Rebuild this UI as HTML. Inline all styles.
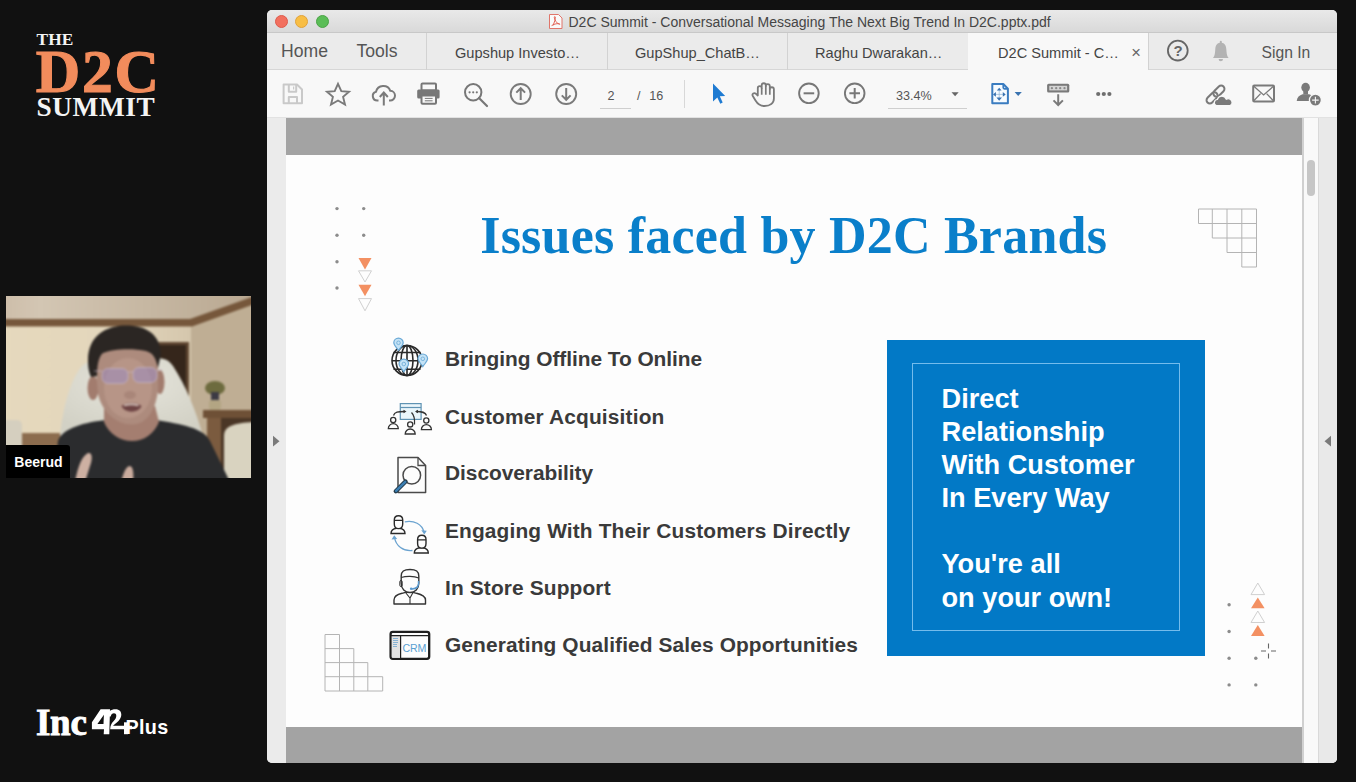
<!DOCTYPE html>
<html><head><meta charset="utf-8">
<style>
*{margin:0;padding:0;box-sizing:border-box}
html,body{width:1356px;height:782px;overflow:hidden;background:#111111;font-family:"Liberation Sans",sans-serif}
.a{position:absolute}
.t{position:absolute;white-space:pre;line-height:1}
svg{position:absolute;overflow:visible}
</style></head><body>
<div class="a" style="left:0;top:0;width:1356px;height:782px">

<!-- ===== LEFT: logo ===== -->
<div class="t" style="left:36.5px;top:31.3px;font-family:'Liberation Serif',serif;font-weight:700;font-size:17.3px;color:#f4f4f4;letter-spacing:0.2px">THE</div>
<div class="t" style="left:35.8px;top:40.6px;font-family:'Liberation Serif',serif;font-size:61.6px;color:#f28c5c;font-weight:700;letter-spacing:1.7px;-webkit-text-stroke:1.1px #f28c5c">D2C</div>
<div class="t" style="left:36.5px;top:93.5px;font-family:'Liberation Serif',serif;font-weight:700;font-size:27.3px;color:#f4f4f4;letter-spacing:0.6px">SUMMIT</div>

<!-- ===== video ===== -->
<div id="video" class="a" style="left:6px;top:296px;width:245px;height:182px;overflow:hidden;background:#dccfb6">
  <svg width="253" height="190" style="left:-4px;top:-4px;filter:blur(0.9px)"><g transform="translate(4,4)">
    <defs>
      <linearGradient id="wallg" x1="0" x2="1" y1="0" y2="0">
        <stop offset="0" stop-color="#e6d9bd"/><stop offset="0.45" stop-color="#e3d6bc"/><stop offset="1" stop-color="#c9baa0"/>
      </linearGradient>
      <linearGradient id="ceilg" x1="0" x2="1" y1="0" y2="0">
        <stop offset="0" stop-color="#cdbda9"/><stop offset="0.15" stop-color="#d3c6b3"/><stop offset="1" stop-color="#b9a891"/>
      </linearGradient>
      <radialGradient id="chairg" cx="0.5" cy="0.3" r="0.7">
        <stop offset="0" stop-color="#e6e5dc"/><stop offset="1" stop-color="#d2d1c5"/>
      </radialGradient>
    </defs>
    <rect x="-4" y="-4" width="253" height="190" fill="url(#wallg)"/>
    <path d="M-4 -4 H249 V2 L185 24 H-4 Z" fill="url(#ceilg)"/>
    <path d="M185 30 L249 8 V186 H185 Z" fill="#bfae94"/>
    <path d="M-4 23 H184 L249 0 V8 L186 30.5 H-4 Z" fill="#76573b"/>
    <!-- doorway -->
    <rect x="149" y="46" width="34" height="95" fill="#5f4631"/>
    <rect x="152" y="49" width="28" height="92" fill="#35261b"/>
    <!-- wainscot left -->
    <rect x="-4" y="137" width="64" height="49" fill="#8c6c4e"/>
    <rect x="-4" y="124" width="20" height="62" rx="5" fill="#d5cfbf"/>
    <!-- mantel right -->
    <rect x="197" y="114" width="52" height="8" fill="#6e5036"/>
    <rect x="201" y="122" width="14" height="64" fill="#7b5b3f"/>
    <rect x="215" y="122" width="34" height="64" fill="#4a3626"/>
    <path d="M218 186 V140 C218 130 228 127 249 126 V186 Z" fill="#d9d3c0"/>
    <!-- vase flowers -->
    <ellipse cx="209" cy="92" rx="10" ry="7" fill="#6d6b3e"/>
    <rect x="205" y="96" width="8" height="10" fill="#3c3a44"/>
    <rect x="203" y="104" width="12" height="10" rx="3" fill="#b3a583"/>
    <!-- chair -->
    <path d="M54 140 C57 112 64 84 76 70 C80 66 86 65 92 65 L150 62 C158 62 163 64 167 70 C180 90 190 115 197 140 Z" fill="url(#chairg)"/>
    <!-- shirt -->
    <path d="M47 186 L52 145 C56 132 80 126 100 124 C108 134 122 142 132 142 C140 140 146 132 150 124 C175 128 198 132 204 145 L224 186 Z" fill="#2b2c2e"/>
    <!-- neck -->
    <path d="M98 110 H149 L153 126 C148 138 138 145 126 145 C114 145 103 138 98 126 Z" fill="#a47e70"/>
    <!-- ears -->
    <ellipse cx="87" cy="92" rx="5.5" ry="12" fill="#a27c6e"/>
    <ellipse cx="154" cy="86" rx="4.5" ry="12" fill="#a27c6e"/>
    <!-- face -->
    <path d="M89 66 C90 52 104 46 121 46 C139 46 151 52 152 66 L152 94 C150 112 142 128.5 126 128.5 C110 128.5 96 116 92 98 Z" fill="#ad8b7d"/>
    <ellipse cx="122" cy="92" rx="24" ry="30" fill="#c09e90" opacity="0.55"/>
    <!-- hair -->
    <path d="M82 64 C82 40 100 29.5 120 29.5 C140 29.5 154 38 155 58 L152 72 C150 62 147 57 140 55 C126 52 106 53 97 57 C93 60 91 68 91 80 L85 81 C82 74 82 68 82 64 Z" fill="#2b2623"/>
    
    <!-- glasses -->
    <rect x="96" y="72.5" width="26" height="15" rx="6" fill="#9d8cc0" opacity="0.55"/>
    <rect x="127" y="71.5" width="24" height="15" rx="6" fill="#9d8cc0" opacity="0.55"/>
    <g fill="none" stroke="#c8b8c8" stroke-width="0.9" opacity="0.8">
      <rect x="96" y="72.5" width="26" height="15" rx="6"/><rect x="127" y="71.5" width="24" height="15" rx="6"/>
      <path d="M88 75 H96 M122 76 H127 M151 74 H156"/>
    </g>
    <!-- nose shadow -->
    <ellipse cx="124" cy="99" rx="6" ry="4" fill="#9c786c" opacity="0.5"/>
    <!-- mouth -->
    <path d="M115.5 110 C120 106 131 106 135.5 110 C133 117 119 118 115.5 110 Z" fill="#6e4444"/>
    <path d="M118 109.5 C123 108 128 108 132.5 109.5" stroke="#d8c8c0" stroke-width="1.6" fill="none"/>
    <!-- hands -->
    <path d="M69 186 C72 170 76 160 82 157 C86 156 87 162 84 170 L79 186 Z" fill="#cdb0a2"/>
    <path d="M115 186 C118 174 121 170 124 170 C127 171 128 176 127 186 Z" fill="#c9ab9d"/>
    </g>
  </svg>
  <div class="a" style="left:0;top:149px;width:64px;height:33px;background:#000;border-radius:0 3px 0 0"></div>
  <div class="t" style="left:8.3px;top:158.8px;font-weight:700;font-size:14px;color:#fff">Beerud</div>
</div>

<!-- ===== Inc42 logo ===== -->
<div id="inc42" class="a" style="left:0;top:0;width:200px;height:782px">
  <div class="t" style="left:36px;top:703.5px;font-family:'Liberation Serif',serif;font-weight:700;font-size:37px;color:#fff;letter-spacing:-0.3px;-webkit-text-stroke:0.9px #fff">Inc</div>
  <svg width="200" height="782" style="left:0;top:0">
    <path fill-rule="evenodd" d="M100.6 709.2 H110 L109.3 734.2 H103.7 L104 729.2 H91.9 V722.3 Z M103.9 714.8 L97.4 724 H103.5 Z" fill="#fff"/>
    <path d="M106.8 716.5 C107.5 711.5 111 709.2 115.5 709.2 C119.5 709.2 121.3 711.5 121.3 714.5 C121.3 718.5 118.5 721.5 115 724 L113 725.7 H132 V729.2 H110.2 C110.2 726 111.5 723.2 113.5 721.3 C115.5 719.3 116.3 717.5 116.3 715.8 C116.3 714 115.2 713.3 114 713.3 C112.3 713.3 111.2 714.5 110.7 716.5 Z" fill="#fff"/>
    <path d="M124 722.3 H128 V734.2 H124 Z" fill="#fff"/>
  </svg>
  <div class="t" style="left:125.5px;top:717.5px;font-weight:700;font-size:19.8px;color:#fff;letter-spacing:0.3px">Plus</div>
</div>

<!-- ===== window ===== -->
<div id="win" class="a" style="left:267px;top:10px;width:1070px;height:753px;border-radius:5px;overflow:hidden;background:#ebebeb">
  <!-- title bar -->
  <div class="a" style="left:0;top:0;width:1070px;height:23px;background:linear-gradient(#e9e9e9,#d9d9d9);border-bottom:1px solid #c8c8c8"></div>
  <div class="a" style="left:7.8px;top:4.8px;width:13px;height:13px;border-radius:50%;background:#f2705f;border:0.6px solid #dd5a4c"></div>
  <div class="a" style="left:28.3px;top:4.8px;width:13px;height:13px;border-radius:50%;background:#f8be45;border:0.6px solid #e0a23a"></div>
  <div class="a" style="left:48.8px;top:4.8px;width:13px;height:13px;border-radius:50%;background:#5bbd57;border:0.6px solid #4aa346"></div>
  <div class="t" style="left:301.5px;top:4.5px;font-size:14px;color:#454545">D2C Summit - Conversational Messaging The Next Big Trend In D2C.pptx.pdf</div>

  <!-- tab bar -->
  <div class="a" style="left:0;top:23px;width:1070px;height:37px;background:#ebebeb;border-bottom:1px solid #d6d6d6"></div>
  <div class="t" style="left:14px;top:32.5px;font-size:17.6px;color:#555">Home</div>
  <div class="t" style="left:89.5px;top:32.5px;font-size:17.6px;color:#555">Tools</div>
  <div class="a" style="left:159px;top:23px;width:1px;height:37px;background:#d2d2d2"></div>
  <div class="a" style="left:340px;top:23px;width:1px;height:37px;background:#d2d2d2"></div>
  <div class="a" style="left:520px;top:23px;width:1px;height:37px;background:#d2d2d2"></div>
  <div class="a" style="left:701px;top:23px;width:180px;height:37px;background:#f8f8f8"></div>
  <div class="a" style="left:881px;top:23px;width:1px;height:37px;background:#d2d2d2"></div>
  <div class="t" style="left:188px;top:35.5px;font-size:14.6px;color:#444">Gupshup Investo…</div>
  <div class="t" style="left:368px;top:35.5px;font-size:14.6px;color:#444">GupShup_ChatB…</div>
  <div class="t" style="left:548px;top:35.5px;font-size:14.6px;color:#444">Raghu Dwarakan…</div>
  <div class="t" style="left:731px;top:35.5px;font-size:14.6px;color:#444">D2C Summit - C…</div>
  <div class="t" style="left:864.3px;top:34.2px;font-size:16.5px;color:#666">×</div>
  <div class="t" style="left:994.5px;top:34.5px;font-size:15.7px;color:#555">Sign In</div>

  <!-- toolbar -->
  <div class="a" style="left:0;top:60px;width:1070px;height:48px;background:#f8f8f8;border-bottom:1px solid #e2e2e2"></div>
  <div class="t" style="left:340.5px;top:79.8px;font-size:12.6px;color:#555">2</div>
  <div class="a" style="left:333px;top:97.5px;width:31px;height:1px;background:#cfcfcf"></div>
  <div class="t" style="left:370px;top:79.8px;font-size:12.6px;color:#555">/</div><div class="t" style="left:382.2px;top:79.8px;font-size:12.6px;color:#555">16</div>
  <div class="a" style="left:417px;top:70px;width:1px;height:28px;background:#d8d8d8"></div>
  <div class="t" style="left:629px;top:79.6px;font-size:12.6px;color:#555">33.4%</div>
  <div class="a" style="left:620.5px;top:97.5px;width:79px;height:1px;background:#cfcfcf"></div>

  <!-- doc area -->
  <div class="a" style="left:0;top:108px;width:1070px;height:645px;background:#ebebeb"></div>
  <div class="a" style="left:19px;top:108px;width:1016px;height:645px;background:#a3a3a3"></div>
  <div id="page" class="a" style="left:19px;top:145px;width:1016px;height:572px;background:#fdfdfd"></div>
  <div class="a" style="left:1035px;top:108px;width:2px;height:645px;background:#d0d0d0"></div>
  <div class="a" style="left:1037px;top:108px;width:14px;height:645px;background:#f9f9f9"></div>
  <div class="a" style="left:1051px;top:108px;width:1px;height:645px;background:#d9d9d9"></div>
  <div class="a" style="left:1052px;top:108px;width:18px;height:645px;background:#e9e9e9"></div>
  <div class="a" style="left:1040px;top:150px;width:8px;height:36px;border-radius:4px;background:#c6c6c6"></div>
</div>



  <!-- toolbar icons -->
  <svg width="1356" height="782" style="left:0;top:0">
    <!-- save -->
    <g fill="none" stroke="#c9c9c9" stroke-width="2" stroke-linejoin="round">
      <path d="M283.6 84.5 H297 L302 89.5 V103.3 H283.6 Z"/>
      <path d="M288.8 84.5 V91.8 H296.2 V84.5"/>
      <path d="M288.8 103.3 V97 H297 V103.3"/>
    </g>
    <line x1="293.6" y1="86.5" x2="293.6" y2="89.5" stroke="#c9c9c9" stroke-width="1.2"/>
    <!-- star -->
    <path d="M338 83.8 L341.3 91.2 L349 91.8 L343.1 96.9 L345 104.6 L338 100.5 L331 104.6 L332.9 96.9 L327 91.8 L334.7 91.2 Z" fill="none" stroke="#7a7a7a" stroke-width="1.9" stroke-linejoin="miter"/>
    <!-- cloud upload -->
    <path d="M378.5 100.5 H377.5 A4.5 4.5 0 0 1 376 91.7 A7.5 7.5 0 0 1 390.3 90.8 A4.8 4.8 0 0 1 390 100.5 H389" fill="none" stroke="#7a7a7a" stroke-width="2"/>
    <path d="M383.8 105.6 V93 M379.8 97 L383.8 92.5 L387.8 97" fill="none" stroke="#7a7a7a" stroke-width="2"/>
    <!-- printer -->
    <rect x="421.5" y="83.6" width="14.5" height="7" rx="1" fill="none" stroke="#777" stroke-width="2"/>
    <rect x="417.2" y="89.5" width="22.4" height="9" rx="1.5" fill="#777"/>
    <rect x="421.5" y="95.5" width="14.5" height="8.2" rx="1" fill="#f8f8f8" stroke="#777" stroke-width="2"/>
    <path d="M424.8 98.4 H432.6 M424.8 100.8 H432.6" stroke="#777" stroke-width="1"/>
    <!-- search -->
    <circle cx="473.2" cy="92.3" r="8.2" fill="none" stroke="#777" stroke-width="2"/>
    <path d="M479 98 L487 106" stroke="#777" stroke-width="2.2" stroke-linecap="round"/>
    <g fill="#777"><circle cx="469.6" cy="92.3" r="1.1"/><circle cx="473.2" cy="92.3" r="1.1"/><circle cx="476.8" cy="92.3" r="1.1"/></g>
    <!-- up / down circles -->
    <circle cx="520.7" cy="94" r="10" fill="none" stroke="#7a7a7a" stroke-width="1.9"/>
    <path d="M520.7 100 V88.5 M516.3 92.6 L520.7 88.2 L525.1 92.6" fill="none" stroke="#7a7a7a" stroke-width="2"/>
    <circle cx="566.2" cy="94" r="10" fill="none" stroke="#7a7a7a" stroke-width="1.9"/>
    <path d="M566.2 88 V99.5 M561.8 95.4 L566.2 99.8 L570.6 95.4" fill="none" stroke="#7a7a7a" stroke-width="2"/>
    <!-- cursor -->
    <path d="M713 83.5 L725.2 96 L719.8 96.2 L722.7 102.6 L720.3 103.8 L717.3 97.4 L713 101.5 Z" fill="#1f7bd2"/>
    <!-- hand -->
    <path d="M757.8 95.5 V88 A1.95 1.95 0 0 1 761.7 88 V85.3 A2.05 2.05 0 0 1 765.8 85.3 V86.2 A2 2 0 0 1 769.8 86.2 V89.3 A2.05 2.05 0 0 1 773.9 89.3 V98.5 C773.9 103.3 770 106 764.5 106 C760 106 757.5 103.8 755.5 100.5 L752.8 96 C751.6 93.8 754 92.3 756 93.8 Z" fill="none" stroke="#7a7a7a" stroke-width="1.8" stroke-linejoin="round"/>
    <path d="M761.7 88 V94.8 M765.8 86.2 V94.8 M769.8 89.3 V94.8" stroke="#7a7a7a" stroke-width="1.7"/>
    <!-- minus / plus -->
    <circle cx="808.9" cy="93.3" r="9.8" fill="none" stroke="#777" stroke-width="1.9"/>
    <path d="M803.6 93.3 H814.2" stroke="#777" stroke-width="2"/>
    <circle cx="854.7" cy="93.3" r="9.8" fill="none" stroke="#777" stroke-width="1.9"/>
    <path d="M849.4 93.3 H860 M854.7 88 V98.6" stroke="#777" stroke-width="2"/>
    <!-- zoom dropdown -->
    <path d="M951.5 92.3 H958.7 L955.1 96.3 Z" fill="#666"/>
    <!-- page move icon -->
    <path d="M992.3 84 H1003.3 L1007.9 88.8 V103.3 H992.3 Z" fill="#f6fbff" stroke="#3a7cc0" stroke-width="2" stroke-linejoin="round"/>
    <path d="M1003.3 84.5 V87.5 A1.3 1.3 0 0 0 1004.6 88.8 H1007.5" fill="none" stroke="#3a7cc0" stroke-width="1.8"/>
    <g stroke="#8fb3d6" stroke-width="0.7" fill="none"><path d="M999.2 89 V100 M994 94.4 H1005"/></g>
    <g fill="#3a73b0"><path d="M999.2 87.8 L996.8 90.6 H1001.6 Z M999.2 100.8 L996.4 97.5 H1002 Z M993 94.4 L995.9 92 V96.8 Z M1005.7 94.4 L1002.8 92 V96.8 Z"/></g>
    <path d="M1014.6 92 H1021.8 L1018.2 96.1 Z" fill="#3a73b0"/>
    <!-- keyboard download -->
    <rect x="1047.1" y="83.7" width="22.2" height="8.8" rx="1.5" fill="#7a7a7a"/>
    <rect x="1049.3" y="85.8" width="17.8" height="4.6" fill="#d4d4d4"/>
    <g fill="#8a8a8a"><circle cx="1051.9" cy="88.2" r="1.15"/><circle cx="1056.2" cy="88.2" r="1.15"/><circle cx="1060.2" cy="88.2" r="1.15"/><circle cx="1064.5" cy="88.2" r="1.15"/></g>
    <path d="M1058.2 94.2 V105 M1053.5 100.4 L1058.2 105 L1062.9 100.4" fill="none" stroke="#7a7a7a" stroke-width="2"/>
    <!-- more dots -->
    <g fill="#6f6f6f"><circle cx="1098.2" cy="94" r="2.1"/><circle cx="1103.8" cy="94" r="2.1"/><circle cx="1109.4" cy="94" r="2.1"/></g>
    <!-- link cloud -->
    <g fill="none" stroke="#7a7a7a" stroke-width="2" transform="rotate(-45 1215.5 94.5)">
      <rect x="1204.2" y="91.2" width="13" height="6.6" rx="3.3"/>
      <rect x="1213.8" y="91.2" width="13" height="6.6" rx="3.3"/>
    </g>
    <path d="M1216.2 105.6 A3.2 3.2 0 0 1 1217.3 99.5 A4.8 4.8 0 0 1 1226.3 99.2 A3.2 3.2 0 0 1 1230.1 105.6 Z" fill="#7a7a7a" stroke="#f8f8f8" stroke-width="1.2"/>
    <!-- mail -->
    <rect x="1253.2" y="85.4" width="20.8" height="16" rx="1" fill="none" stroke="#7a7a7a" stroke-width="2"/>
    <path d="M1253.8 86.3 L1263.6 95 L1273.4 86.3 M1253.8 100.8 L1260.6 93.6 M1273.4 100.8 L1266.6 93.6" fill="none" stroke="#7a7a7a" stroke-width="1.3"/>
    <!-- person add -->
    <ellipse cx="1305.6" cy="87.5" rx="4.3" ry="4.7" fill="#7a7a7a"/>
    <path d="M1303.3 91 H1308 V94.5 H1303.3 Z" fill="#7a7a7a"/>
    <path d="M1296.7 100.9 C1297 97.5 1299.5 95.2 1302.5 94.3 H1309 C1310.2 94.5 1311 95 1311.6 95.8 L1311.6 100.9 Z" fill="#7a7a7a"/>
    <circle cx="1315.4" cy="100.1" r="6" fill="#7a7a7a" stroke="#f8f8f8" stroke-width="1.3"/>
    <path d="M1315.4 96.8 V103.4 M1312.1 100.1 H1318.7" stroke="#f4f4f4" stroke-width="1.1"/>

    <!-- tab bar icons -->
    <circle cx="1177.8" cy="50.6" r="9.9" fill="none" stroke="#666" stroke-width="1.8"/>
    <text x="1173.4" y="56.4" font-family="Liberation Sans" font-weight="700" font-size="15" fill="#666">?</text>
    <path d="M1213 58 C1215 56 1215 52 1215.3 49 C1215.6 45 1217.5 43.2 1219.8 42.8 V41.5 C1219.8 40.6 1221.8 40.6 1221.8 41.5 V42.8 C1224.1 43.2 1226 45 1226.3 49 C1226.6 52 1226.6 56 1228.6 58 Z" fill="#b3b3b3"/>
    <path d="M1218.6 59 A2.2 2.2 0 0 0 1223 59 Z" fill="#b3b3b3"/>
    <!-- title pdf icon -->
    <path d="M549.5 14.5 H558.5 L562 18 V28.5 H549.5 Z" fill="#fafafa" stroke="#e0756a" stroke-width="1"/>
    <path d="M553 25.5 C554.5 22 555.5 19 555.3 17 C555 16.2 554.2 16.6 554.3 17.6 C554.8 20.5 557 23.5 559.3 24.3 C560.2 24.6 560 23.6 558.8 23.6 C556.5 23.5 553.6 24.3 551.6 25.6" fill="none" stroke="#e0584a" stroke-width="0.9"/>
  </svg>


  <!-- bullet icons -->
  <svg width="1356" height="782" style="left:0;top:0">
    <!-- globe -->
    <g fill="none" stroke="#2a2a2a" stroke-width="1.6">
      <circle cx="407" cy="360.5" r="15"/>
      <ellipse cx="407" cy="360.5" rx="6" ry="15"/>
      <ellipse cx="407" cy="360.5" rx="11" ry="15"/>
      <path d="M407 345.5 V375.5 M393.5 352.5 H420.5 M392 360.8 H422 M393.5 369.3 H420.5"/>
    </g>
    <g fill="#c5e3f6" stroke="#6aa9d6" stroke-width="1.2">
      <path d="M398.5 350.5 C396 347 393.8 345 393.8 342.8 A4.7 4.7 0 0 1 403.2 342.8 C403.2 345 401 347 398.5 350.5 Z"/>
      <path d="M422.8 366.6 C420.3 363 418 361 418 358.8 A4.8 4.8 0 0 1 427.6 358.8 C427.6 361 425.3 363 422.8 366.6 Z"/>
      <path d="M403.8 371.8 C401.3 368.2 399 366.2 399 364 A4.8 4.8 0 0 1 408.6 364 C408.6 366.2 406.3 368.2 403.8 371.8 Z"/>
    </g>
    <g fill="none" stroke="#6aa9d6" stroke-width="0.8">
      <circle cx="398.5" cy="342.8" r="1.8"/><circle cx="422.8" cy="358.8" r="1.8"/><circle cx="403.8" cy="364" r="1.8"/>
    </g>
    <!-- acquisition -->
    <rect x="400.3" y="403.6" width="20.8" height="15.8" fill="#eaf6fb" stroke="#5f93b3" stroke-width="1.2"/>
    <path d="M400.3 407.5 H421.1" stroke="#5f93b3" stroke-width="1.2"/>
    <g fill="none" stroke="#333" stroke-width="1.3">
      <circle cx="393.2" cy="420" r="2.6"/><path d="M388.3 428.7 A5 5 0 0 1 398.3 428.7 Z"/>
      <circle cx="410.2" cy="424.4" r="2.6"/><path d="M405.2 434 A5 5 0 0 1 415.2 434 Z"/>
      <circle cx="426.3" cy="420.5" r="2.6"/><path d="M421.4 429.6 A5 5 0 0 1 431.4 429.6 Z"/>
      <path d="M393.5 415.5 C394.5 412 398 411.5 405 411.5"/>
      <path d="M426.5 415.5 C425.5 412 422 411.5 416 411.5"/>
      <path d="M411.5 412.5 C414 415 415 418 414.5 424.5"/>
    </g>
    <g fill="#333"><path d="M406.5 411.5 L403.5 409.8 V413.2 Z"/><path d="M415 411.5 L418 409.8 V413.2 Z"/></g>
    <!-- discover -->
    <path d="M398 457.5 H418 L425.6 465.5 V492.5 H398 Z" fill="#fdfdfd" stroke="#4a4a4a" stroke-width="1.5" stroke-linejoin="round"/>
    <path d="M418 457.5 V465.5 H425.6" fill="none" stroke="#4a4a4a" stroke-width="1.3"/>
    <circle cx="411.8" cy="475.2" r="8.8" fill="#fdfdfd" stroke="#4a4a4a" stroke-width="1.5"/>
    <path d="M405.5 481.5 L395.8 491.2" stroke="#233a4a" stroke-width="4.4" stroke-linecap="round"/>
    <path d="M405.2 481.8 L396.1 490.9" stroke="#3b7fb3" stroke-width="2.4" stroke-linecap="round"/>
    <!-- engage -->
    <g fill="#fdfdfd" stroke="#2a2a2a" stroke-width="1.4">
      <path d="M391 533.5 C391 530 393 528.8 396.5 528.3 H399.5 C403 528.8 405 530 405 533.5 Z"/>
      <path d="M394.3 520 C394.3 516.5 396 515.8 398.5 515.8 C401 515.8 402.7 516.5 402.7 520 V524 C402.7 527 401 528.6 398.5 528.6 C396 528.6 394.3 527 394.3 524 Z"/>
      <path d="M414.3 553 C414.3 549.5 416.3 548.3 419.8 547.8 H422.8 C426.3 548.3 428.3 549.5 428.3 553 Z"/>
      <path d="M417.6 539.5 C417.6 536 419.3 535.3 421.8 535.3 C424.3 535.3 426 536 426 539.5 V543.5 C426 546.5 424.3 548.1 421.8 548.1 C419.3 548.1 417.6 546.5 417.6 543.5 Z"/>
    </g>
    <path d="M394.3 520.3 H402.7 M417.6 539.8 H426" stroke="#2a2a2a" stroke-width="1.2"/>
    <g fill="none" stroke="#6ba3d0" stroke-width="1.3">
      <path d="M404.8 521.8 C414 520 422 524 424 532"/>
      <path d="M412.5 550.5 C403 551.5 396 546 394.5 537.5"/>
    </g>
    <g fill="#6ba3d0"><path d="M424.3 534.5 L421.3 530.3 L426.8 530.8 Z"/><path d="M394.2 535.2 L391.6 539.5 L397.2 539 Z"/></g>
    <!-- support -->
    <g fill="#fdfdfd" stroke="#333" stroke-width="1.4" stroke-linejoin="round">
      <path d="M394 604 V600 C394 596.5 397 594.5 402 593.3 L405.5 592.3 H413 L416.5 593.3 C421.5 594.5 425.5 596.5 425.5 600 V604 Z"/>
      <path d="M401.2 576 C401.2 571 404 569.5 410 569.5 C416 569.5 418.8 571 418.8 576 V583 C418.8 589 415 592.5 410 592.5 C405 592.5 401.2 589 401.2 583 Z"/>
    </g>
    <path d="M401.2 577.5 C406 576 414 576 418.8 578" fill="none" stroke="#333" stroke-width="1.3"/>
    <path d="M405.5 592.5 L410 598 L413 592.5 M410 598 V604" fill="none" stroke="#333" stroke-width="1.1"/>
    <rect x="399.8" y="580.5" width="2.4" height="6" rx="1.2" fill="none" stroke="#333" stroke-width="1"/>
    <path d="M418.5 581 C419.5 586 417 589 412 589" fill="none" stroke="#5a9ad0" stroke-width="1.6"/>
    <circle cx="411.2" cy="588.8" r="1.3" fill="#5a9ad0"/>
    <!-- crm -->
    <rect x="390.6" y="631.8" width="38.6" height="27" rx="2.2" fill="#fdfdfd" stroke="#1e1e1e" stroke-width="2.3"/>
    <rect x="391.8" y="636" width="8.6" height="21.6" fill="#e2e2e2"/>
    <path d="M390.6 635.6 H429" stroke="#1e1e1e" stroke-width="1.1"/>
    <path d="M400.6 635.6 V658.5" stroke="#1e1e1e" stroke-width="1.2"/>
    <g stroke="#6fa6d0" stroke-width="0.8"><path d="M393 638.5 H398 M393 640.5 H398 M393 642.5 H398 M393 644.5 H397 M393 646.5 H397"/></g>
    <text x="402.6" y="651.8" font-family="Liberation Sans" font-size="10.6" fill="#5aa0d2" letter-spacing="-0.2">CRM</text>
  </svg>

<!-- ===== SLIDE CONTENT ===== -->
<div id="slide" class="a" style="left:0;top:0;width:1356px;height:782px">
  <!-- decorations -->
  <svg width="1356" height="782" style="left:0;top:0">
    <g fill="#8c8c8c">
      <circle cx="337" cy="208.6" r="1.7"/><circle cx="363.7" cy="208.6" r="1.7"/>
      <circle cx="337" cy="235.2" r="1.7"/><circle cx="363.7" cy="235.2" r="1.7"/>
      <circle cx="337" cy="261.8" r="1.7"/>
      <circle cx="337" cy="288" r="1.7"/>
      <circle cx="1229.1" cy="604.8" r="1.7"/>
      <circle cx="1229.1" cy="631.5" r="1.7"/>
      <circle cx="1229.1" cy="658.2" r="1.7"/><circle cx="1255.8" cy="658.2" r="1.7"/>
      <circle cx="1229.1" cy="684.9" r="1.7"/><circle cx="1255.8" cy="684.9" r="1.7"/>
    </g>
    <g fill="#f39062">
      <path d="M358.5 258 L371.5 258 L365 269.5 Z"/>
      <path d="M358.5 284.8 L371.5 284.8 L365 296.3 Z"/>
      <path d="M1251 608.3 L1264.6 608.3 L1257.8 597.5 Z"/>
      <path d="M1251 636 L1264.6 636 L1257.8 625 Z"/>
    </g>
    <g fill="none" stroke="#d0d0d0" stroke-width="1">
      <path d="M358.5 270.8 L371.5 270.8 L365 282 Z"/>
      <path d="M358.5 298.6 L371.5 298.6 L365 310.8 Z"/>
      <path d="M1251 594.6 L1264.6 594.6 L1257.8 583 Z"/>
      <path d="M1251 622.5 L1264.6 622.5 L1257.8 611 Z"/>
    </g>
    <g fill="none" stroke="#b4b4b4" stroke-width="1">
      <path d="M1198.5 209 H1256.5 V267 H1241.8 V209 M1227 209 V252.5 H1256.5 M1212.3 209 V238 H1256.5 M1198.5 209 V223.5 H1256.5"/>
      <path d="M325 634.5 V691 H382.7 V676.7 H325 M339.5 634.5 H325 M339.5 634.5 V691 M325 648.6 H353.8 V691 M325 662.6 H367.8 V691"/>
    </g>
    <g stroke="#666" stroke-width="1.1">
      <path d="M1261 651 H1266 M1271 651 H1276 M1268.5 643.5 V648.5 M1268.5 653.5 V658.5"/>
    </g>
    <path d="M273 435.8 L279.5 441.2 L273 446.6 Z" fill="#7a7a7a"/>
    <path d="M1331 435.8 L1324.5 441.2 L1331 446.6 Z" fill="#7a7a7a"/>
  </svg>

  <div class="t" style="left:480.2px;top:209.8px;font-family:'Liberation Serif',serif;font-weight:700;font-size:52px;letter-spacing:0.22px;color:#0a7fca">Issues faced by D2C Brands</div>

  <div class="t" style="left:445px;top:348.8px;font-weight:700;font-size:20.9px;color:#3a3a3a;letter-spacing:-0.05px">Bringing Offline To Online</div>
  <div class="t" style="left:445px;top:406.5px;font-weight:700;font-size:20.9px;color:#3a3a3a;letter-spacing:0.16px">Customer Acquisition</div>
  <div class="t" style="left:445px;top:462.8px;font-weight:700;font-size:20.9px;color:#3a3a3a;letter-spacing:-0.04px">Discoverability</div>
  <div class="t" style="left:445px;top:520.8px;font-weight:700;font-size:20.9px;color:#3a3a3a;letter-spacing:0.13px">Engaging With Their Customers Directly</div>
  <div class="t" style="left:445px;top:578.4px;font-weight:700;font-size:20.9px;color:#3a3a3a;letter-spacing:0.13px">In Store Support</div>
  <div class="t" style="left:445px;top:635.3px;font-weight:700;font-size:20.9px;color:#3a3a3a;letter-spacing:0.11px">Generating Qualified Sales Opportunities</div>

  <div class="a" style="left:887px;top:340px;width:318px;height:315.7px;background:#0279c6"></div>
  <div class="a" style="left:912px;top:363px;width:268px;height:267.5px;border:1.3px solid #74bcec"></div>
  <div class="a" style="left:941.5px;top:382px;width:230px;font-weight:700;font-size:27.2px;line-height:33.1px;color:#ffffff;white-space:pre">Direct
Relationship
With Customer
In Every Way

You're all
on your own!</div>
</div>

</div>
</body></html>
